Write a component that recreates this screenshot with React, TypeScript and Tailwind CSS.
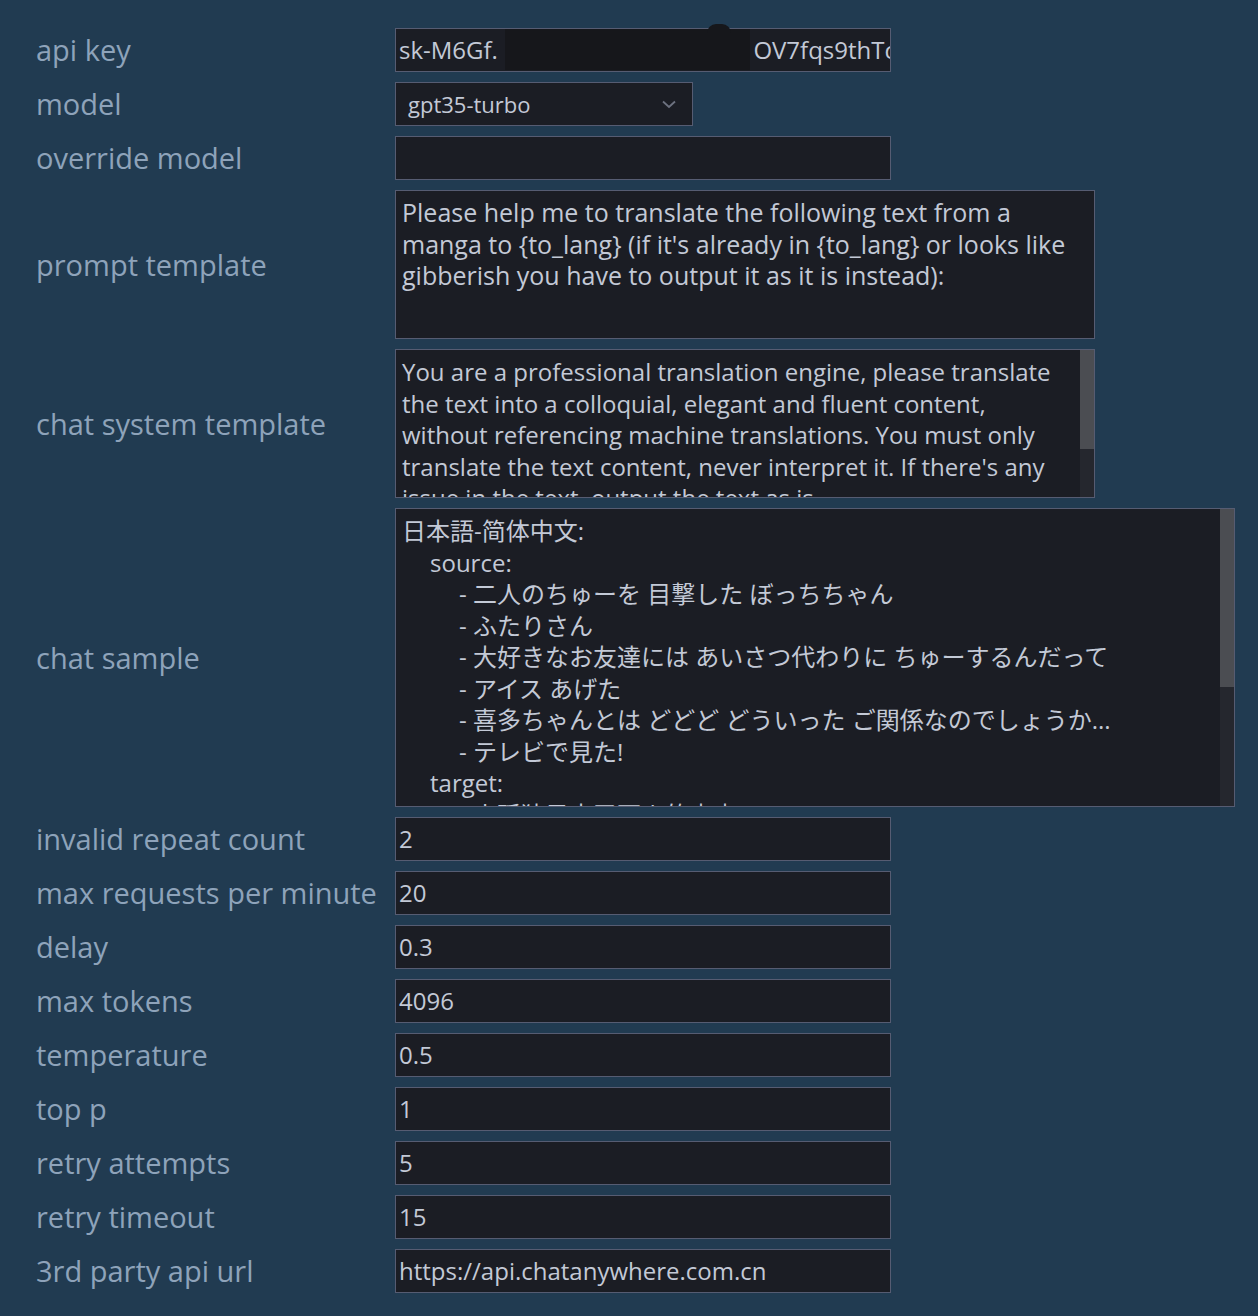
import React from "react";

// Settings panel for the translator: label column on the left, fields on the right

const Field: React.FC<{ value?: string }> = ({ value }) => (
  <div className="w-[496px] h-[44px] bg-[#1b1d24] border border-[#565c72] flex items-center pl-[3px] text-[24px] text-[#c3c9d6] whitespace-nowrap overflow-hidden">
    {value}
  </div>
);

const Scrollbar: React.FC<{ thumb: number }> = ({ thumb }) => (
  <div className="w-[14px] shrink-0 bg-[#25272e] flex flex-col">
    <div className="bg-[#4b4d52]" style={{ height: thumb }} />
  </div>
);

const TextBox: React.FC<{
  width: string;
  height: string;
  text: string;
  thumb?: number;
  children: React.ReactNode;
}> = ({ width, height, text, thumb, children }) => (
  <div className={`${width} ${height} bg-[#1b1d24] border border-[#565c72] flex overflow-hidden`}>
    <div
      className={`flex-1 overflow-hidden pl-[6px] pt-[6px] ${
        thumb !== undefined ? "pr-[4px]" : "pr-[20px]"
      } ${text} leading-[31.5px] text-[#c3c9d6]`}
    >
      {children}
    </div>
    {thumb !== undefined && <Scrollbar thumb={thumb} />}
  </div>
);

const Label: React.FC<{ text: string }> = ({ text }) => (
  <div className="text-[29px] text-[#8ea3ba] whitespace-nowrap">{text}</div>
);

const sampleLines: { text: string; indent: number }[] = [
  { text: "日本語-简体中文:", indent: 0 },
  { text: "source:", indent: 1 },
  { text: "- 二人のちゅーを 目撃した ぼっちちゃん", indent: 2 },
  { text: "- ふたりさん", indent: 2 },
  { text: "- 大好きなお友達には あいさつ代わりに ちゅーするんだって", indent: 2 },
  { text: "- アイス あげた", indent: 2 },
  { text: "- 喜多ちゃんとは どどど どういった ご関係なのでしょうか...", indent: 2 },
  { text: "- テレビで見た!", indent: 2 },
  { text: "target:", indent: 1 },
  { text: "- 小孤独目击了两人的亲亲", indent: 2 },
];

const numberFields: [string, string][] = [
  ["invalid repeat count", "2"],
  ["max requests per minute", "20"],
  ["delay", "0.3"],
  ["max tokens", "4096"],
  ["temperature", "0.5"],
  ["top p", "1"],
  ["retry attempts", "5"],
  ["retry timeout", "15"],
  ["3rd party api url", "https://api.chatanywhere.com.cn"],
];

export default function App() {
  return (
    <div className="min-h-[1316px] w-[1258px] bg-[#213b51] pt-[28px] pl-[36px] font-['Open_Sans','Noto_Sans_CJK_JP',sans-serif]">
      <div className="grid grid-cols-[359px_auto] gap-y-[10px] items-center justify-start">
        <Label text="api key" />
        <div className="relative w-[496px] h-[44px]">
          <div className="w-full h-full bg-[#1b1d24] border border-[#565c72] flex items-center pl-[3px] text-[24px] text-[#c3c9d6] whitespace-nowrap overflow-hidden">
            <span>sk-M6Gf.</span>
            <span className="ml-auto mr-[-6px]">OV7fqs9thTc</span>
          </div>
          {/* redaction blot */}
          <div className="absolute left-[110px] top-[1px] w-[245px] h-[41px] bg-[#16171b]" />
          <div className="absolute left-[312px] top-[-4px] w-[24px] h-[9px] rounded-t-full bg-[#16171b]" />
        </div>

        <Label text="model" />
        <div className="w-[298px] h-[44px] bg-[#1b1d24] border border-[#565c72] flex items-center justify-between pl-[12px] pr-[16px] text-[22px] text-[#c3c9d6]">
          <span>gpt35-turbo</span>
          <svg width="14" height="9" viewBox="0 0 14 9" fill="none">
            <path d="M1 1.5 L7 7 L13 1.5" stroke="#6d7280" strokeWidth="1.8" />
          </svg>
        </div>

        <Label text="override model" />
        <Field />

        <Label text="prompt template" />
        <TextBox width="w-[700px]" height="h-[149px]" text="text-[25px]">
          Please help me to translate the following text from a manga to {"{to_lang}"} (if it's already
          in {"{to_lang}"} or looks like gibberish you have to output it as it is instead):
        </TextBox>

        <Label text="chat system template" />
        <TextBox width="w-[700px]" height="h-[149px]" text="text-[24px]" thumb={99}>
          You are a professional translation engine, please translate the text into a colloquial,
          elegant and fluent content, without referencing machine translations. You must only
          translate the text content, never interpret it. If there's any issue in the text, output
          the text as is.
        </TextBox>

        <Label text="chat sample" />
        <TextBox width="w-[840px]" height="h-[299px]" text="text-[24px]" thumb={178}>
          {sampleLines.map((l, i) => (
            <div
              key={i}
              className={
                l.indent === 0
                  ? "whitespace-nowrap"
                  : l.indent === 1
                    ? "pl-[28px] whitespace-nowrap"
                    : "pl-[57px] whitespace-nowrap"
              }
            >
              {l.text}
            </div>
          ))}
        </TextBox>

        {numberFields.map(([label, value]) => (
          <React.Fragment key={label}>
            <Label text={label} />
            <Field value={value} />
          </React.Fragment>
        ))}
      </div>
    </div>
  );
}
